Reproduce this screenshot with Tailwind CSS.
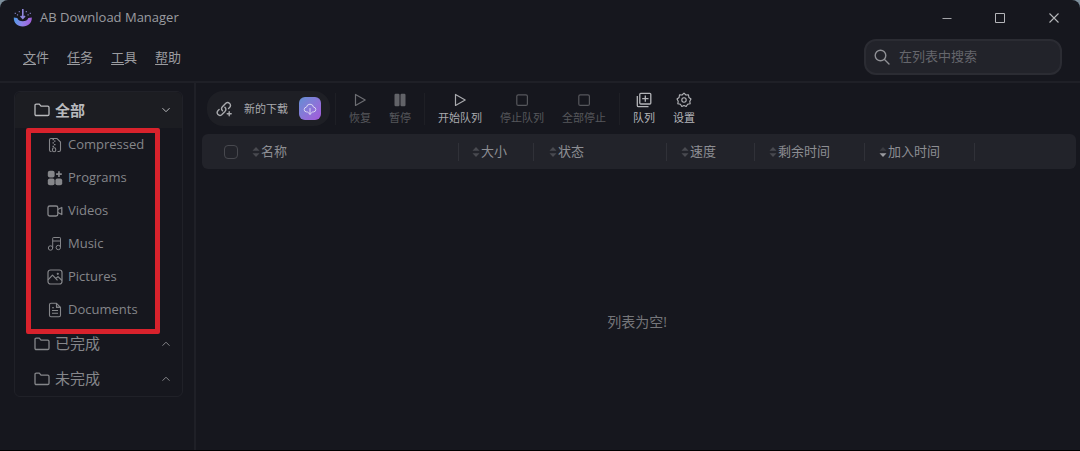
<!DOCTYPE html>
<html lang="zh-CN">
<head>
    <meta charset="UTF-8">
    <meta name="viewport" content="width=device-width, initial-scale=1.0">
    <title>AB Download Manager</title>
    <script src="https://cdn.jsdelivr.net/npm/@tailwindcss/browser@4"></script>
</head>
<body class="bg-[#7d8f9c] font-['Open_Sans','Noto_Sans_CJK_SC',sans-serif] text-[13px] text-[#9b9ca0]">
    <div class="flex flex-col h-screen bg-[#16171e] rounded-t-lg border-b border-black overflow-hidden">
        <!-- Title bar -->
        <header class="flex items-center h-9 shrink-0 pl-[13px]">
            <svg class="w-5 h-5 mr-[7px]" viewBox="0 0 20 20" fill="none">
                <defs>
                    <linearGradient id="logoFill" x1="1" y1="10" x2="19" y2="14" gradientUnits="userSpaceOnUse">
                        <stop stop-color="#4f9be6"/>
                        <stop offset=".5" stop-color="#8f83ea"/>
                        <stop offset="1" stop-color="#a35bd8"/>
                    </linearGradient>
                </defs>
                <path d="M.800 9.500L4.300 10C5 12.300 7 13.300 9.800 13.300S14.600 12.300 15.300 10L18.800 9.500C19 14.800 15.300 18.500 9.800 18.500S.600 14.800 .800 9.500z" fill="url(#logoFill)"/>
                <path d="M9.800 1v8.500M7.600 8L9.800 10.300 12 8" stroke="#8f86dc" stroke-width="1.600"/>
                <path d="M6.300 3v1.300M13.300 3v1.300M4.500 6.300v1.300M15.100 6.300v1.300M2.300 4.800v1.200M17.300 4.800v1.200" stroke="#7d79b8" stroke-width="1.200"/>
            </svg>
            <h1 class="flex-1">AB Download Manager</h1>
            <button class="flex items-center justify-center w-[52px] h-9" aria-label="最小化">
                <svg class="w-3 h-3" viewBox="0 0 12 12" stroke="#a3a4a8" fill="none"><path d="M1.500 6.500h9"/></svg>
            </button>
            <button class="flex items-center justify-center w-[54px] h-9" aria-label="最大化">
                <svg class="w-3 h-3" viewBox="0 0 12 12" stroke="#b4b5b9" fill="none"><path d="M1.500 1.500h9v9h-9z"/></svg>
            </button>
            <button class="flex items-center justify-center w-[53px] h-9" aria-label="关闭">
                <svg class="w-3 h-3" viewBox="0 0 12 12" stroke="#b4b5b9" stroke-width="1.100" fill="none"><path d="M1.500 1.500l9 9M10.500 1.500l-9 9"/></svg>
            </button>
        </header>

        <!-- Menu and search -->
        <div class="flex items-start justify-between shrink-0 h-[47px] pt-[3px] pl-[23px] pr-[18px] border-b-2 border-[#1f2027]">
            <nav class="flex gap-[18px] h-[38px] items-center">
                <button><span class="underline underline-offset-2">文</span>件</button>
                <button><span class="underline underline-offset-2">任</span>务</button>
                <button><span class="underline underline-offset-2">工</span>具</button>
                <button><span class="underline underline-offset-2">帮</span>助</button>
            </nav>
            <label class="flex items-center w-[198px] h-9 pl-[8px] rounded-xl bg-[#22232a] border-2 border-[#2b2c33]">
                <svg class="w-4 h-4 mr-[9px] shrink-0" viewBox="0 0 16 16" fill="none" stroke="#8f9095" stroke-width="1.400" stroke-linecap="round"><circle cx="6.500" cy="6.500" r="5.300"/><path d="M10.500 10.500l4.500 4.500"/></svg>
                <input type="text" aria-label="搜索" placeholder="在列表中搜索" class="w-full bg-transparent outline-none placeholder:text-[#65666c]">
            </label>
        </div>

        <div class="flex flex-1 min-h-0">
            <!-- Categories -->
            <aside class="w-[196px] shrink-0 pl-[14px] pr-[11px] pt-[8px] border-r-2 border-[#1f2027]">
                <div class="border border-[#202128] rounded-md">
                    <button class="flex items-center w-full h-9 pl-[19px] pr-3 bg-[#1c1d22] rounded-t-md text-[#b9babd]">
                        <svg class="w-4 h-4 mr-[5px]" viewBox="0 0 16 16" fill="none" stroke="currentColor" stroke-width="1.300" stroke-linejoin="round"><path d="M1 3.500Q1 2.200 2.300 2.200H5.300L7 4.200H13.700Q15 4.200 15 5.500V12.200Q15 13.500 13.700 13.500H2.300Q1 13.500 1 12.200z"/></svg>
                        <span class="flex-1 text-left text-[15px] font-bold">全部</span>
                        <svg class="w-2 h-2" viewBox="0 0 8 8" fill="none" stroke="currentColor"><path d="M.500 2.200L4 5.700 7.500 2.200"/></svg>
                    </button>
                    <ul class="relative text-[#85868a]">
                        <li><a href="#" class="flex items-center h-[33px] pl-[32px]">
                            <svg class="w-4 h-4 mr-[5px]" viewBox="0 0 16 16" fill="none" stroke="currentColor" stroke-width="1.100"><path d="M4.500 14.500H4Q2.500 14.500 2.500 13V3Q2.500 1.500 4 1.500H10L13.500 5V13Q13.500 14.500 12 14.500H10.500"/><path d="M5.500 2.500H7M7 4.200h1.500M5.500 5.900H7M7 7.600h1.500M5.500 9.300H7" stroke-width="1.300"/><rect x="5.500" y="10.800" width="3.200" height="4" rx="1.500"/></svg>
                            Compressed</a></li>
                        <li><a href="#" class="flex items-center h-[33px] pl-[32px]">
                            <svg class="w-4 h-4 mr-[5px]" viewBox="0 0 16 16" fill="currentColor"><rect x=".8" y=".8" width="6.800" height="6.800" rx="2"/><rect x=".8" y="8.400" width="6.800" height="6.800" rx="2"/><rect x="8.400" y="8.400" width="6.800" height="6.800" rx="2"/><path d="M11.100 1.200h1.700v2h2v1.700h-2v2h-1.700v-2h-2V3.200h2z"/></svg>
                            Programs</a></li>
                        <li><a href="#" class="flex items-center h-[33px] pl-[32px]">
                            <svg class="w-4 h-4 mr-[5px]" viewBox="0 0 16 16" fill="none" stroke="currentColor" stroke-width="1.300" stroke-linejoin="round"><rect x="1" y="3" width="9.800" height="10" rx="1.800"/><path d="M10.800 6.500L14.800 4.500V11.500L10.800 9.500"/></svg>
                            Videos</a></li>
                        <li><a href="#" class="flex items-center h-[33px] pl-[32px]">
                            <svg class="w-4 h-4 mr-[5px]" viewBox="0 0 16 16" fill="none" stroke="currentColor"><circle cx="3.500" cy="12" r="2.200"/><circle cx="11.300" cy="11.500" r="2.200"/><path d="M5.700 12V2.200Q5.700 1.500 6.500 1.500H12.800Q13.500 1.500 13.500 2.200V11.500M5.700 5H13.500"/></svg>
                            Music</a></li>
                        <li><a href="#" class="flex items-center h-[33px] pl-[32px]">
                            <svg class="w-4 h-4 mr-[5px]" viewBox="0 0 16 16" fill="none" stroke="currentColor" stroke-width="1.200" stroke-linejoin="round"><rect x="1" y="1" width="14" height="14" rx="2.500"/><path d="M1 10.800L5.500 6.200 10.500 11.400M8.800 9.500L11 7.600 15 11.500"/><circle cx="10.800" cy="4.800" r=".5"/></svg>
                            Pictures</a></li>
                        <li><a href="#" class="flex items-center h-[33px] pl-[32px]">
                            <svg class="w-4 h-4 mr-[5px]" viewBox="0 0 16 16" fill="none" stroke="currentColor" stroke-width="1.100" stroke-linejoin="round"><path d="M9.500 1.300H4Q2.500 1.300 2.500 2.800V13.200Q2.500 14.700 4 14.700H12Q13.500 14.700 13.500 13.200V5.300zV5.300H13.500"/><path d="M9.500 1.300V5.300H13.500M5 5.800h2M5 8.500h6M5 11.300h6"/></svg>
                            Documents</a></li>
                        <!-- Highlight frame -->
                        <li aria-hidden="true" class="absolute top-0 left-[11px] right-[22px] -bottom-2 border-5 border-[#d8222c] rounded-xs pointer-events-none"></li>
                    </ul>
                    <button class="flex items-center w-full h-[35px] pl-[19px] pr-3 text-[#85868a]">
                        <svg class="w-4 h-4 mr-[5px]" viewBox="0 0 16 16" fill="none" stroke="currentColor" stroke-width="1.300" stroke-linejoin="round"><path d="M1 3.500Q1 2.200 2.300 2.200H5.300L7 4.200H13.700Q15 4.200 15 5.500V12.200Q15 13.500 13.700 13.500H2.300Q1 13.500 1 12.200z"/></svg>
                        <span class="flex-1 text-left text-[15px]">已完成</span>
                        <svg class="w-2 h-2" viewBox="0 0 8 8" fill="none" stroke="currentColor"><path d="M.500 5.700L4 2.200 7.500 5.700"/></svg>
                    </button>
                    <button class="flex items-center w-full h-[35px] pl-[19px] pr-3 text-[#85868a]">
                        <svg class="w-4 h-4 mr-[5px]" viewBox="0 0 16 16" fill="none" stroke="currentColor" stroke-width="1.300" stroke-linejoin="round"><path d="M1 3.500Q1 2.200 2.300 2.200H5.300L7 4.200H13.700Q15 4.200 15 5.500V12.200Q15 13.500 13.700 13.500H2.300Q1 13.500 1 12.200z"/></svg>
                        <span class="flex-1 text-left text-[15px]">未完成</span>
                        <svg class="w-2 h-2" viewBox="0 0 8 8" fill="none" stroke="currentColor"><path d="M.500 5.700L4 2.200 7.500 5.700"/></svg>
                    </button>
                </div>
            </aside>

            <main class="flex flex-col flex-1 min-w-0 pt-2 pr-1 pl-[6px]">
                <!-- Toolbar -->
                <div class="flex items-center gap-[2px] pl-[5px] mb-2 text-[11px] leading-4">
                    <button class="flex items-center w-[123px] h-[35px] pl-[9px] rounded-2xl bg-[#1e1f25] text-[#a9aaae]">
                        <svg class="w-4 h-4 mr-3" viewBox="0 0 16 16" fill="none" stroke="currentColor" stroke-width="1.400" stroke-linecap="round"><path d="M6.500 9.800Q4.600 7.700 6.400 5.700L9.800 2.200Q11.700 .600 13.600 2.400 15.300 4.400 13.700 6.300L12.500 7.600"/><path d="M8.900 6.300Q10.800 8.400 9 10.400L5.700 13.700Q3.800 15.300 2 13.600 .300 11.600 1.900 9.700L3.100 8.500"/><path d="M13.200 10.700v4M11.200 12.700h4"/></svg>
                        新的下载
                        <span class="flex items-center justify-center w-[22px] h-[23px] ml-[11px] rounded-md bg-linear-to-br from-[#5f8fd3] to-[#a457dc]">
                            <svg class="w-[14px] h-[14px]" viewBox="0 0 14 14" fill="none" stroke="#d9d6f2" stroke-linecap="round" stroke-linejoin="round"><path d="M4.500 10H3.700Q1.200 9.700 1.200 7.500 1.300 5.300 3.500 5.100 4 2.200 7 2.200T10.500 5.100Q12.800 5.300 12.800 7.500 12.800 9.700 10.300 10H9.500M7 6.500V12.300M5.300 10.700L7 12.300 8.700 10.700"/></svg>
                        </span>
                    </button>
                    <span class="w-px h-8 mx-[3px] bg-[#1e1f25]"></span>
                    <button disabled class="flex flex-col items-center gap-[2px] px-2 text-[#56575c]">
                        <svg class="w-4 h-4" viewBox="0 0 16 16" fill="none" stroke="#6d6e73" stroke-width="1.200" stroke-linejoin="round"><path d="M3.500 2.500V13.500L13.200 8z"/></svg>
                        恢复
                    </button>
                    <button disabled class="flex flex-col items-center gap-[2px] px-2 text-[#56575c]">
                        <svg class="w-4 h-4" viewBox="0 0 16 16" fill="#626368"><rect x="2.500" y="1.800" width="5" height="12.500" rx="1.200"/><rect x="8.500" y="1.800" width="5" height="12.500" rx="1.200"/></svg>
                        暂停
                    </button>
                    <span class="w-px h-8 mx-[3px] bg-[#1e1f25]"></span>
                    <button class="flex flex-col items-center gap-[2px] px-2 text-[#a9aaae]">
                        <svg class="w-4 h-4" viewBox="0 0 16 16" fill="none" stroke="currentColor" stroke-width="1.200" stroke-linejoin="round"><path d="M3.500 2.500V13.500L13.200 8z"/></svg>
                        开始队列
                    </button>
                    <button disabled class="flex flex-col items-center gap-[2px] px-2 text-[#56575c]">
                        <svg class="w-4 h-4" viewBox="0 0 16 16" fill="none" stroke="currentColor" stroke-width="1.200"><rect x="2.800" y="2.800" width="10.600" height="10.600" rx="1.500"/></svg>
                        停止队列
                    </button>
                    <button disabled class="flex flex-col items-center gap-[2px] px-2 text-[#56575c]">
                        <svg class="w-4 h-4" viewBox="0 0 16 16" fill="none" stroke="currentColor" stroke-width="1.200"><rect x="2.800" y="2.800" width="10.600" height="10.600" rx="1.500"/></svg>
                        全部停止
                    </button>
                    <span class="w-px h-8 mx-[3px] bg-[#1e1f25]"></span>
                    <button class="flex flex-col items-center gap-[2px] px-2 text-[#b4b5b9]">
                        <svg class="w-4 h-4" viewBox="0 0 16 16" fill="none" stroke="currentColor" stroke-width="1.300"><rect x="3.800" y="1.300" width="11" height="10.700" rx="1"/><path d="M1.300 4V13.500Q1.300 14.700 2.500 14.700H12.500M9.300 3.500V9.800M6.200 6.700H12.500"/></svg>
                        队列
                    </button>
                    <button class="flex flex-col items-center gap-[2px] px-2 text-[#b4b5b9]">
                        <svg class="w-4 h-4" viewBox="0 0 16 16" fill="none" stroke="currentColor" stroke-width="1.100" stroke-linejoin="round"><path d="M8 1.200L9.900 3 12.500 2.900 12.900 5.500 15 7 13.800 9.300 14.200 11.800 11.600 12.300 10.200 14.500 8 13.500 5.800 14.500 4.400 12.300 1.800 11.800 2.200 9.300 1 7 3.100 5.500 3.500 2.900 6.100 3z"/><circle cx="8" cy="8" r="2.200"/></svg>
                        设置
                    </button>
                </div>

                <!-- Download list -->
                <table class="w-full table-fixed text-left bg-[#22232a] rounded-md text-[#8d8e93]">
                    <thead>
                        <tr class="h-[35px]">
                            <th class="w-9 font-normal"><input type="checkbox" aria-label="全选" class="block ml-auto appearance-none w-[14px] h-[14px] rounded-sm border border-[#47484e]"></th>
                            <th class="w-[221px] font-normal">
                                <div class="flex items-center h-[18px] pl-[14px] border-r border-[#303138]">
                                    <svg class="w-2 h-3 mr-px" viewBox="0 0 8 12" fill="#494a50"><path d="M4 1L7.500 4.800H.500z"/><path d="M4 11L.500 7.200h7z"/></svg>名称
                                </div>
                            </th>
                            <th class="w-[75px] font-normal">
                                <div class="flex items-center h-[18px] pl-[13px] border-r border-[#303138]">
                                    <svg class="w-2 h-3 mr-px" viewBox="0 0 8 12" fill="#494a50"><path d="M4 1L7.500 4.800H.500z"/><path d="M4 11L.500 7.200h7z"/></svg>大小
                                </div>
                            </th>
                            <th class="w-[133px] font-normal">
                                <div class="flex items-center h-[18px] pl-[15px] border-r border-[#303138]">
                                    <svg class="w-2 h-3 mr-px" viewBox="0 0 8 12" fill="#494a50"><path d="M4 1L7.500 4.800H.500z"/><path d="M4 11L.500 7.200h7z"/></svg>状态
                                </div>
                            </th>
                            <th class="w-[88px] font-normal">
                                <div class="flex items-center h-[18px] pl-[14px] border-r border-[#303138]">
                                    <svg class="w-2 h-3 mr-px" viewBox="0 0 8 12" fill="#494a50"><path d="M4 1L7.500 4.800H.500z"/><path d="M4 11L.500 7.200h7z"/></svg>速度
                                </div>
                            </th>
                            <th class="w-[110px] font-normal">
                                <div class="flex items-center h-[18px] pl-[14px] border-r border-[#303138]">
                                    <svg class="w-2 h-3 mr-px" viewBox="0 0 8 12" fill="#494a50"><path d="M4 1L7.500 4.800H.500z"/><path d="M4 11L.500 7.200h7z"/></svg>剩余时间
                                </div>
                            </th>
                            <th class="w-[110px] font-normal" aria-sort="descending">
                                <div class="flex items-center h-[18px] pl-[14px] border-r border-[#303138]">
                                    <svg class="w-2 h-3 mr-px" viewBox="0 0 8 12" fill="#3a3b41"><path d="M4 1L7.500 4.800H.500z"/><path d="M4 11L.500 7.200h7z" fill="#9a9ba0"/></svg>加入时间
                                </div>
                            </th>
                            <td></td>
                        </tr>
                    </thead>
                </table>
                <p class="flex flex-1 items-center justify-center pt-6 pr-1 text-sm text-[#75767a]">列表为空!</p>
            </main>
        </div>
    </div>
</body>
</html>
